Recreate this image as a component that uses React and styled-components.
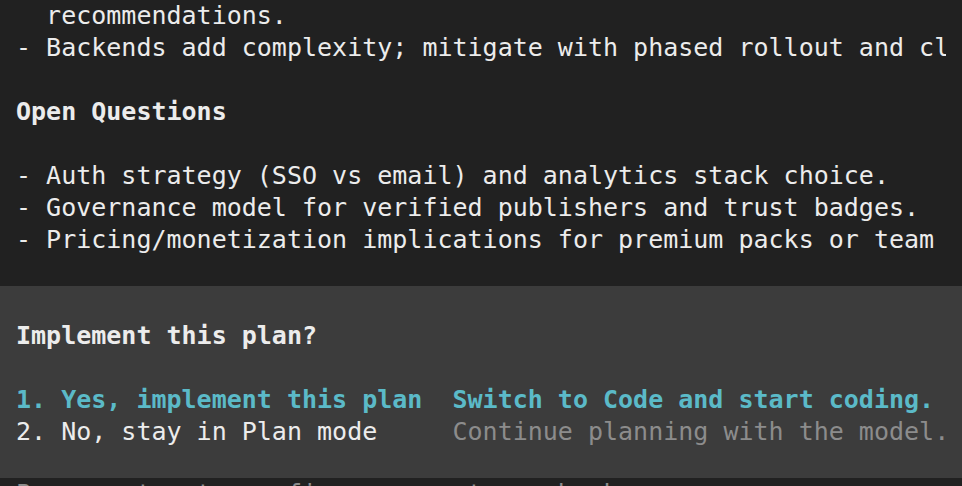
import React from 'react'
import styled, { createGlobalStyle } from 'styled-components'

const colors = {
  bg: '#212121',
  panel: '#3c3c3c',
  text: '#ececec',
  accent: '#5bbac8',
  dim: '#8c8c8c',
}

const GlobalStyle = createGlobalStyle`
  html, body {
    margin: 0;
    padding: 0;
    background: ${colors.bg};
    overflow: hidden;
  }
  body {
    font-family: "DejaVu Sans Mono", "Liberation Mono", monospace;
    font-size: 25px;
    line-height: 32px;
    color: ${colors.text};
  }
`

const Screen = styled.div`
  width: 962px;
  height: 486px;
  overflow: hidden;
  background: ${colors.bg};
`

const Scroll = styled.div`
  display: flex;
  flex-direction: column;
`

const Transcript = styled.section`
  padding: 0 16px;
  display: flex;
  flex-direction: column;
`

const Line = styled.div`
  height: ${(p) => (p.$short ? 30 : 32)}px;
  white-space: pre;
  overflow: hidden;
  font-weight: ${(p) => (p.$bold ? 700 : 400)};
  color: ${(p) => (p.$dim ? colors.dim : colors.text)};
`

const Prompt = styled.section`
  background: ${colors.panel};
  padding: 34px 16px 30px;
  display: flex;
  flex-direction: column;
`

const Title = styled.div`
  height: 32px;
  font-weight: 700;
  white-space: pre;
  margin-bottom: 32px;
`

const Option = styled.div`
  display: grid;
  grid-template-columns: 29ch 1fr;
  height: 32px;
  white-space: pre;
  overflow: hidden;
  color: ${(p) => (p.$active ? colors.accent : colors.text)};
  font-weight: ${(p) => (p.$active ? 700 : 400)};
`

const Hint = styled.span`
  color: ${(p) => (p.$active ? colors.accent : colors.dim)};
`

const Footer = styled.div`
  padding: 0 16px;
  height: 32px;
  white-space: pre;
  color: ${colors.dim};
`

const options = [
  { label: '1. Yes, implement this plan', hint: 'Switch to Code and start coding.', active: true },
  { label: '2. No, stay in Plan mode', hint: 'Continue planning with the model.', active: false },
]

export default function App() {
  return (
    <>
      <GlobalStyle />
      <Screen>
        <Scroll>
          <Transcript>
            <Line>{'  recommendations.'}</Line>
            <Line>- Backends add complexity; mitigate with phased rollout and clear fallbacks.</Line>
            <Line />
            <Line $bold>Open Questions</Line>
            <Line />
            <Line>- Auth strategy (SSO vs email) and analytics stack choice.</Line>
            <Line>- Governance model for verified publishers and trust badges.</Line>
            <Line>- Pricing/monetization implications for premium packs or team features.</Line>
            <Line $short />
          </Transcript>
          <Prompt>
            <Title>Implement this plan?</Title>
            {options.map((o) => (
              <Option key={o.label} $active={o.active}>
                <span>{o.label}</span>
                <Hint $active={o.active}>{o.hint}</Hint>
              </Option>
            ))}
          </Prompt>
          <Footer>Press enter to confirm or esc to go back</Footer>
        </Scroll>
      </Screen>
    </>
  )
}
